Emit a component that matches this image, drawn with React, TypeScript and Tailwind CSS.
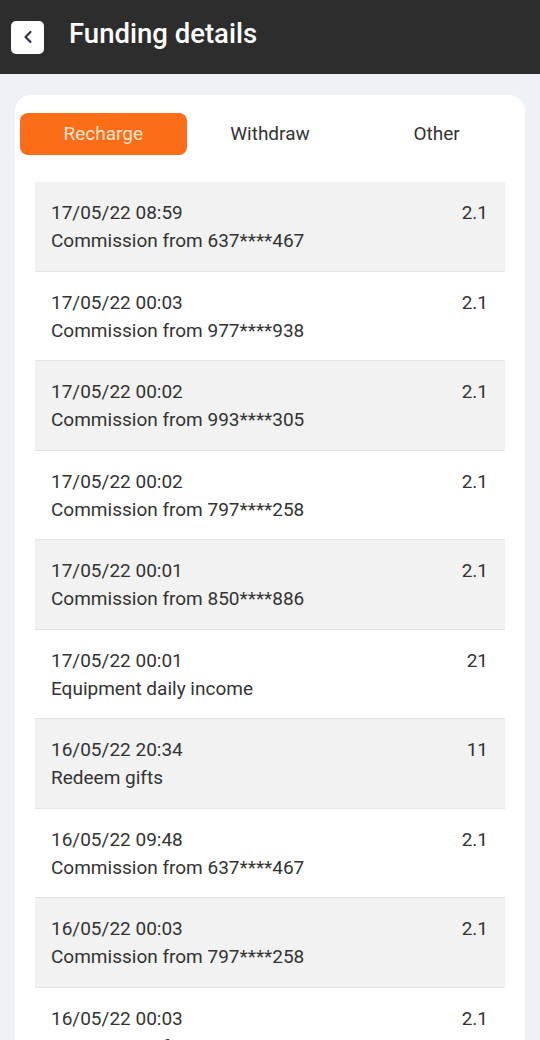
import { ChevronLeft } from "lucide-react";

const rows = [
  { date: "17/05/22 08:59", desc: "Commission from 637****467", amount: "2.1" },
  { date: "17/05/22 00:03", desc: "Commission from 977****938", amount: "2.1" },
  { date: "17/05/22 00:02", desc: "Commission from 993****305", amount: "2.1" },
  { date: "17/05/22 00:02", desc: "Commission from 797****258", amount: "2.1" },
  { date: "17/05/22 00:01", desc: "Commission from 850****886", amount: "2.1" },
  { date: "17/05/22 00:01", desc: "Equipment daily income", amount: "21" },
  { date: "16/05/22 20:34", desc: "Redeem gifts", amount: "11" },
  { date: "16/05/22 09:48", desc: "Commission from 637****467", amount: "2.1" },
  { date: "16/05/22 00:03", desc: "Commission from 797****258", amount: "2.1" },
  { date: "16/05/22 00:03", desc: "Commission from 993****305", amount: "2.1" },
];

const tabs = ["Recharge", "Withdraw", "Other"];

export default function App() {
  return (
    <div className="w-[540px] h-[1040px] overflow-hidden bg-[#eef1f5] font-['Roboto',sans-serif]">
      {/* Header */}
      <div className="h-[74px] bg-[#2e2d2d] flex items-center px-[11px] pb-[7px]">
        <div className="w-[33px] h-[33px] mt-[7px] rounded-[5px] bg-white flex items-center justify-center">
          <ChevronLeft className="w-5 h-5 text-[#3a2d48]" strokeWidth={2.6} />
        </div>
        <h1 className="ml-[25px] text-white text-[27.5px] font-medium leading-none">
          Funding details
        </h1>
      </div>

      {/* Card */}
      <div className="mx-[15px] mt-[21px] bg-white rounded-t-[16px] pt-[18px] pb-4 px-[5px]">
        <div className="grid grid-cols-3">
          {tabs.map((t, i) => (
            <div
              key={t}
              className={
                i === 0
                  ? "h-[42px] rounded-[8px] bg-[#fd6c17] text-[#ffe6d2] text-[19px] flex items-center justify-center"
                  : "h-[42px] text-[#333333] text-[19px] flex items-center justify-center"
              }
            >
              {t}
            </div>
          ))}
        </div>

        <div className="mt-[27px] mx-[15px]">
          {rows.map((r, i) => (
            <div
              key={i}
              className={
                "h-[89.5px] box-border border-b border-[#e4e4e4] pl-4 pr-[17px] pt-[17px] flex justify-between text-[19px] leading-[28px] text-[#333333] " +
                (i % 2 === 0 ? "bg-[#f2f2f2]" : "bg-white")
              }
            >
              <div>
                <div>{r.date}</div>
                <div>{r.desc}</div>
              </div>
              <div>{r.amount}</div>
            </div>
          ))}
        </div>
      </div>
    </div>
  );
}
